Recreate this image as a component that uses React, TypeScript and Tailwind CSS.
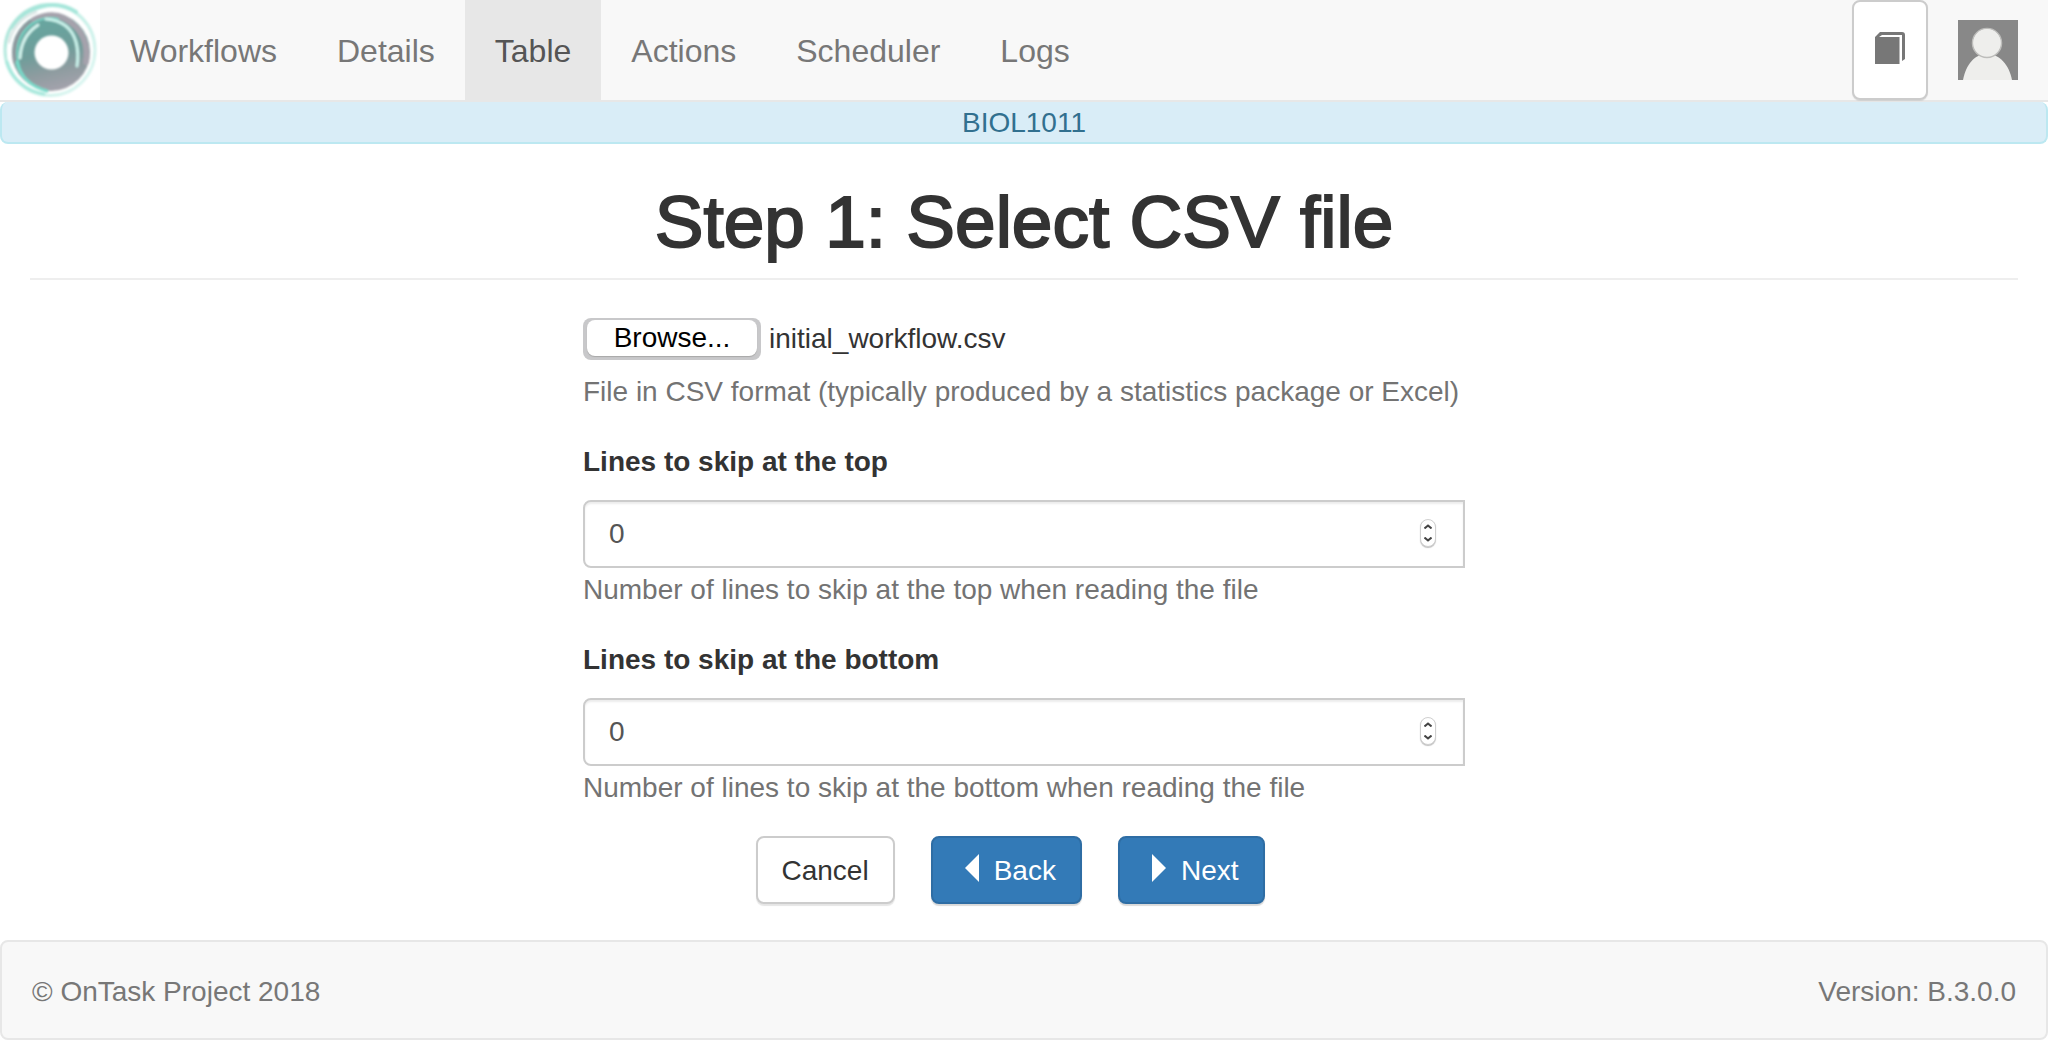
import React, { useRef, useState } from "react";

const navItems = ["Workflows", "Details", "Table", "Actions", "Scheduler", "Logs"];

function Logo() {
  return (
    <svg viewBox="0 0 100 100" className="block size-full" aria-hidden="true">
      <defs>
        <linearGradient id="disc" x1="0.35" y1="0" x2="0.6" y2="1">
          <stop offset="0" stopColor="#66a8a1" />
          <stop offset="0.5" stopColor="#6f9d9a" />
          <stop offset="0.75" stopColor="#8e9ca0" />
          <stop offset="1" stopColor="#a5a3ad" />
        </linearGradient>
        <linearGradient id="ring" x1="0" y1="0" x2="1" y2="1">
          <stop offset="0" stopColor="#9fdfd2" />
          <stop offset="0.4" stopColor="#bfeee4" />
          <stop offset="1" stopColor="#e0f7f3" />
        </linearGradient>
        <filter id="soft" x="-10%" y="-10%" width="120%" height="120%">
          <feGaussianBlur stdDeviation="1" />
        </filter>
      </defs>
      <rect width="100" height="100" fill="#fff" />
      <g filter="url(#soft)" fill="none" strokeLinecap="round">
        <ellipse cx="50" cy="50" rx="45" ry="45.500" stroke="url(#ring)" strokeWidth="3" />
        <path d="M14 28A44 44 0 0 1 76 12" stroke="#a6e6da" strokeWidth="4" />
        <path d="M9 42A41 41 0 0 1 36 12" stroke="#dfe9e8" strokeWidth="3" />
        <path d="M7 62A45 45 0 0 0 44 94" stroke="#a5e8dc" strokeWidth="3" />
        <circle cx="51" cy="52" r="39" fill="url(#disc)" />
        <path d="M34 20Q58 8 76 27Q89 41 86 62" stroke="#a5a2ac" strokeWidth="6" />
        <path d="M15 62Q11 36 30 22" stroke="#8f979d" strokeWidth="4" />
        <path d="M20 70Q12 44 27 28Q40 15 58 19" stroke="#74d3c3" strokeWidth="2" />
        <path d="M20 58Q21 36 38 25" stroke="#d4f4ee" strokeWidth="3" />
        <path d="M46 19Q70 21 76 42Q79 53 77 66" stroke="#c9f1ea" strokeWidth="3" />
        <path d="M17 62Q22 84 47 91" stroke="#78dccb" strokeWidth="3" />
      </g>
      <circle cx="51.500" cy="52.500" r="17" fill="#fff" filter="url(#soft)" />
    </svg>
  );
}

function NumberField({ id, label, help }: { id: string; label: string; help: string }) {
  const [value, setValue] = useState(0);
  return (
    <div className="mb-[30px]">
      <label htmlFor={id} className="mb-[18px] block font-bold">
        {label}
      </label>
      <div className="relative">
        <input
          id={id}
          type="number"
          min={0}
          value={value}
          onChange={(e) => setValue(Number(e.target.value))}
          className="block h-[68px] w-full appearance-none rounded-l-lg border-2 border-[#ccc] bg-white px-6 text-[#555] shadow-[inset_0_2px_2px_rgba(0,0,0,0.075)] outline-none [-moz-appearance:textfield] [&::-webkit-inner-spin-button]:appearance-none"
        />
        <span className="absolute top-[19px] right-[29px] flex h-7 w-4 flex-col overflow-hidden rounded-full border border-[#d0d0d0] bg-white shadow-[0_1px_1px_rgba(0,0,0,0.25)]">
          <button
            type="button"
            aria-label={"Increase " + label}
            onClick={() => setValue(value + 1)}
            className="flex h-1/2 items-center justify-center"
          >
            <svg viewBox="0 0 8 5" className="h-[5px] w-2" fill="none" stroke="#444" strokeWidth="2">
              <path d="M0.500 4.500L4 1.500L7.500 4.500" />
            </svg>
          </button>
          <button
            type="button"
            aria-label={"Decrease " + label}
            onClick={() => setValue(Math.max(0, value - 1))}
            className="flex h-1/2 items-center justify-center"
          >
            <svg viewBox="0 0 8 5" className="h-[5px] w-2" fill="none" stroke="#444" strokeWidth="2">
              <path d="M0.500 0.500L4 3.500L7.500 0.500" />
            </svg>
          </button>
        </span>
      </div>
      <p className="mt-0.5 text-[#737373]">{help}</p>
    </div>
  );
}

export default function App() {
  const fileInput = useRef<HTMLInputElement>(null);
  const [fileName, setFileName] = useState("initial_workflow.csv");

  return (
    <div className="bg-white font-['Liberation_Sans',Arial,sans-serif] text-[28px] leading-10 text-[#333]">
      <nav className="flex h-[102px] items-start border-b-2 border-[#e7e7e7] bg-[#f8f8f8] text-[32px]">
        <a href="#home" aria-label="Home" className="size-[100px] shrink-0">
          <Logo />
        </a>
        {navItems.map((item) => (
          <a
            key={item}
            href={"#" + item.toLowerCase()}
            aria-current={item === "Table" ? "page" : undefined}
            className="px-[30px] pt-[31px] pb-[29px] text-[#777] aria-[current=page]:bg-[#e7e7e7] aria-[current=page]:text-[#555]"
          >
            {item}
          </a>
        ))}
        <div className="ml-auto flex items-center gap-[30px] pr-[30px]">
          <button
            type="button"
            aria-label="Documentation"
            className="flex h-[100px] w-[76px] items-center justify-center rounded-lg border-2 border-[#ccc] bg-white pb-1 shadow-[0_1px_1px_rgba(0,0,0,0.1)]"
          >
            <svg viewBox="0 0 30 32" className="h-8 w-[30px]" aria-hidden="true">
              <path d="M5 0H27Q30 0 30 3V27L27 29V3H7L4 5H24.500V32H0V5Z" fill="#777" />
            </svg>
          </button>
          <a href="#profile" aria-label="Profile">
            <svg viewBox="0 0 60 60" className="block size-[60px]" aria-hidden="true">
              <rect width="60" height="60" fill="#888" />
              <path d="M5 60C8 45 16 34 29 34S51 45 54 60Z" fill="#eeeeec" />
              <circle cx="29" cy="23" r="14.500" fill="#eeeeec" stroke="#bdbdbb" strokeWidth="1.500" />
              <circle cx="29" cy="22.500" r="13.500" fill="#eeeeec" />
            </svg>
          </a>
        </div>
      </nav>

      <div className="flex h-[42px] items-center justify-center rounded-lg border-2 border-t-0 border-[#bce8f1] bg-[#d9edf7] pt-0.5 text-[#31708f]">
        BIOL1011
      </div>

      <main className="px-[30px]">
        <h1 className="border-b-2 border-[#eee] pt-[38px] pb-4 text-center text-[73px] leading-[80px] [-webkit-text-stroke:2px_#333]">
          Step 1: Select CSV file
        </h1>

        <form className="mx-auto mt-[38px] w-[882px] max-w-full" onSubmit={(e) => e.preventDefault()}>
          <div className="mb-[30px]">
            <input
              ref={fileInput}
              id="csv-file"
              type="file"
              accept=".csv"
              aria-label="CSV file"
              className="sr-only"
              onChange={(e) => setFileName(e.target.files?.[0]?.name ?? fileName)}
            />
            <div className="flex items-center gap-2">
              <button
                type="button"
                onClick={() => fileInput.current?.click()}
                className="h-[42px] w-[178px] rounded-lg bg-[#c8c8ca] px-1 pt-0.5 pb-1 text-black"
              >
                <span className="block h-full rounded-lg bg-white leading-9 shadow-[0_1px_1px_#a8a8a8]">
                  Browse...
                </span>
              </button>
              <label htmlFor="csv-file">{fileName}</label>
            </div>
            <p className="mt-3 text-[#737373]">
              File in CSV format (typically produced by a statistics package or Excel)
            </p>
          </div>

          <NumberField
            id="skip-top"
            label="Lines to skip at the top"
            help="Number of lines to skip at the top when reading the file"
          />
          <NumberField
            id="skip-bottom"
            label="Lines to skip at the bottom"
            help="Number of lines to skip at the bottom when reading the file"
          />

          <div className="-mt-0.5 flex justify-center gap-9 pr-7">
            <button
              type="button"
              className="h-[68px] rounded-lg border-2 border-[#ccc] bg-white px-6 pt-0.5 shadow-[0_2px_1px_rgba(0,0,0,0.1)]"
            >
              Cancel
            </button>
            <button
              type="button"
              className="flex h-[68px] items-center rounded-lg border-2 border-[#2e6da4] bg-[#337ab7] px-6 pt-0.5 text-white shadow-[0_2px_1px_rgba(0,0,0,0.15)]"
            >
              <svg viewBox="0 0 14 28" className="mr-[15px] mb-1.5 ml-2 h-7 w-3.5" aria-hidden="true">
                <path d="M14 0V28L0 14Z" fill="#fff" />
              </svg>
              Back
            </button>
            <button
              type="submit"
              className="flex h-[68px] items-center rounded-lg border-2 border-[#2e6da4] bg-[#337ab7] px-6 pt-0.5 text-white shadow-[0_2px_1px_rgba(0,0,0,0.15)]"
            >
              <svg viewBox="0 0 14 28" className="mr-[15px] mb-1.5 ml-2 h-7 w-3.5" aria-hidden="true">
                <path d="M0 0V28L14 14Z" fill="#fff" />
              </svg>
              Next
            </button>
          </div>
        </form>
      </main>

      <footer className="mt-9 flex justify-between rounded-lg border-2 border-[#e7e7e7] bg-[#f8f8f8] px-[30px] pt-[30px] pb-[26px] text-[#777]">
        <span>© OnTask Project 2018</span>
        <span>Version: B.3.0.0</span>
      </footer>
    </div>
  );
}
